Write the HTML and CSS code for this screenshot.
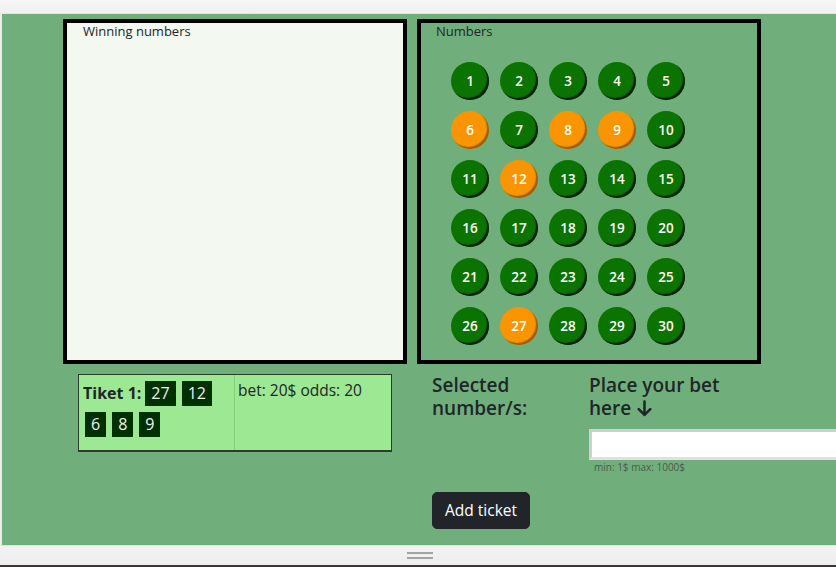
FILE: index.html
```html
<!DOCTYPE html>
<html lang="en">
<head>
<meta charset="utf-8">
<title>Lottery</title>
<link rel="stylesheet" href="styles.css">
</head>
<body>
<div class="topbar"></div>
<div class="frame">
  <main class="app">
    <section class="boards">
      <div class="board winning">
        <div class="board-title">Winning numbers</div>
      </div>
      <div class="board numbers">
        <div class="board-title">Numbers</div>
        <div class="grid">
          <span class="ball">1</span><span class="ball">2</span><span class="ball">3</span><span class="ball">4</span><span class="ball">5</span>
          <span class="ball picked">6</span><span class="ball">7</span><span class="ball picked">8</span><span class="ball picked">9</span><span class="ball">10</span>
          <span class="ball">11</span><span class="ball picked">12</span><span class="ball">13</span><span class="ball">14</span><span class="ball">15</span>
          <span class="ball">16</span><span class="ball">17</span><span class="ball">18</span><span class="ball">19</span><span class="ball">20</span>
          <span class="ball">21</span><span class="ball">22</span><span class="ball">23</span><span class="ball">24</span><span class="ball">25</span>
          <span class="ball">26</span><span class="ball picked">27</span><span class="ball">28</span><span class="ball">29</span><span class="ball">30</span>
        </div>
      </div>
    </section>
    <section class="lower">
      <div class="ticket">
        <div class="cell nums">
          <strong class="tk-title">Tiket 1:</strong>
          <span class="num">27</span><span class="num">12</span><span class="num">6</span><span class="num">8</span><span class="num">9</span>
        </div>
        <div class="cell info">bet: 20$ odds: 20</div>
      </div>
      <div class="side">
        <div class="fields">
          <h5 class="heading selected">Selected number/s:</h5>
          <div class="bet">
            <h5 class="heading">Place your bet here <svg class="arrow" viewBox="0 0 16 16" width="17" height="17"><path d="M8 1.5V14M2.5 8.5L8 14l5.5-5.5" fill="none" stroke="#212529" stroke-width="2.4" stroke-linecap="round" stroke-linejoin="round"/></svg></h5>
            <input class="bet-input" type="text">
            <div class="hint">min: 1$ max: 1000$</div>
          </div>
        </div>
        <button class="btn" type="button">Add ticket</button>
      </div>
    </section>
  </main>
</div>
<div class="bottombar"><span class="grip"></span></div>
<div class="darkline"></div>
</body>
</html>
```

FILE: styles.css
```css
* { box-sizing: border-box; }

html, body {
  margin: 0;
  padding: 0;
}

body {
  width: 836px;
  height: 567px;
  overflow: hidden;
  background: #f1f1f1;
  font-family: "Open Sans", "Noto Sans", sans-serif;
  color: #212529;
}

.topbar {
  height: 14px;
  background: linear-gradient(#f6f6f6, #f0f0f0);
  border-bottom: 1px solid #e4e4e4;
}

.frame {
  display: flex;
  padding-left: 2px;
  background: #ececec;
}

.app {
  flex: 1;
  height: 531px;
  overflow: hidden;
  background: #70af7b;
}

.boards {
  display: flex;
  gap: 10px;
  margin: 5px 0 0 61px;
}

.board {
  width: 344px;
  height: 345px;
  border: 4px solid #000;
}

.winning {
  background: #f3f8f1;
}

.board-title {
  font-size: 13px;
  font-weight: 500;
  line-height: 17px;
  padding: 0 15px;
}

.winning .board-title {
  padding-left: 16px;
}

.grid {
  display: grid;
  grid-template-columns: repeat(5, 38px);
  gap: 11px;
  margin: 22px 0 0 30px;
}

.ball {
  width: 38px;
  height: 38px;
  border-radius: 50%;
  background: #0b7300;
  color: #fff;
  font-size: 13.5px;
  font-weight: 600;
  display: flex;
  align-items: center;
  justify-content: center;
  box-shadow: inset -2px -2px 1px rgba(0, 0, 0, 0.75);
}

.ball.picked {
  background: #f99500;
  box-shadow: inset -2px -2px 1px rgba(90, 45, 0, 0.55);
}

.lower {
  display: flex;
  align-items: flex-start;
  margin: 10px 0 0 76px;
}

.ticket {
  display: flex;
  width: 314px;
  background: #9de893;
  border: 1px solid #2e3a2e;
  border-bottom-width: 2px;
}

.cell {
  width: 50%;
}

.nums {
  display: flex;
  flex-wrap: wrap;
  align-items: center;
  column-gap: 2px;
  row-gap: 6px;
  padding: 6px 4px 13px 4px;
  border-right: 1px solid #83cf7b;
  font-size: 16px;
}

.tk-title {
  font-weight: 700;
  line-height: 25px;
}

.num {
  display: inline-block;
  height: 25px;
  line-height: 25px;
  padding: 0 6px;
  margin: 0 2px;
  background: #003000;
  color: #f1f1f1;
}

.info {
  padding: 3px 3px;
  font-size: 15.5px;
  line-height: 24px;
}

.side {
  margin-left: 40px;
}

.fields {
  display: flex;
}

.heading {
  margin: 0;
  font-size: 19px;
  font-weight: 600;
  line-height: 23px;
}

.selected {
  width: 157px;
}

.bet {
  width: 247px;
}

.bet .heading {
  width: 157px;
}

.arrow {
  vertical-align: -2px;
}

.bet-input {
  display: block;
  width: 250px;
  height: 31px;
  margin-top: 9px;
  border: 3px solid #cfcfcf;
  border-bottom-color: #e0e0e0;
  background: #fff;
}

.hint {
  font-size: 10px;
  line-height: 14px;
  color: #4d5a4e;
  padding-left: 5px;
}

.btn {
  display: block;
  margin-top: 18px;
  padding: 6px 12px;
  font-family: inherit;
  font-size: 15.5px;
  line-height: 23px;
  color: #fff;
  background: #212529;
  border: 1px solid #212529;
  border-radius: 5px;
}

.bottombar {
  height: 20px;
  background: linear-gradient(#f2f2f2, #eeeeee);
  border-top: 1px solid #e2e2e2;
  display: flex;
  justify-content: center;
  padding: 6px 0 0 4px;
}

.grip {
  width: 26px;
  height: 7px;
  border-top: 2px solid #a3a3a3;
  border-bottom: 2px solid #a3a3a3;
}

.darkline {
  height: 2px;
  background: #3b3335;
}
```
